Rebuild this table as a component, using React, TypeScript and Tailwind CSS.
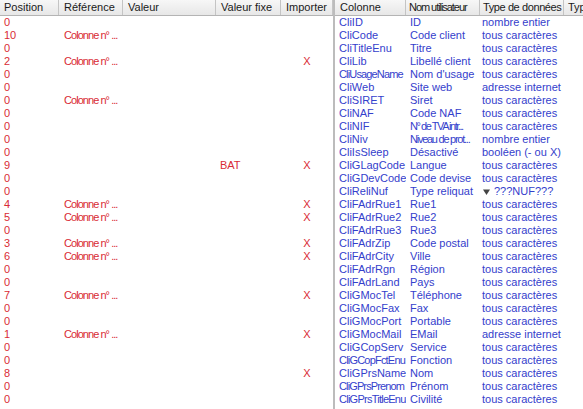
import React from "react";

const RED = "text-[#d92b35]";
const BLUE = "text-[#3440cc]";

const pos = [0, 10, 0, 2, 0, 0, 0, 0, 0, 0, 0, 9, 0, 0, 4, 5, 0, 3, 6, 0, 0, 7, 0, 0, 1, 0, 0, 8, 0, 0];
const refRows = new Set([1, 3, 6, 14, 15, 17, 18, 21, 24]);
const xRows = new Set([3, 11, 14, 15, 17, 18, 21, 24, 27]);

type R = { c: string; cc?: string; n: string; nc?: string; t: string; tri?: boolean };

const right: R[] = [
  { c: "CliID", n: "ID", t: "nombre entier" },
  { c: "CliCode", n: "Code client", t: "tous caractères" },
  { c: "CliTitleEnu", n: "Titre", t: "tous caractères" },
  { c: "CliLib", n: "Libellé client", t: "tous caractères" },
  { c: "CliUsageName", cc: "tracking-[-0.85px]", n: "Nom d'usage", t: "tous caractères" },
  { c: "CliWeb", n: "Site web", t: "adresse internet" },
  { c: "CliSIRET", n: "Siret", t: "tous caractères" },
  { c: "CliNAF", n: "Code NAF", t: "tous caractères" },
  { c: "CliNIF", n: "N° de TVA intr...", nc: "tracking-[-1.45px]", t: "tous caractères" },
  { c: "CliNiv", n: "Niveau de prot...", nc: "tracking-[-1.25px]", t: "nombre entier" },
  { c: "CliIsSleep", n: "Désactivé", t: "booléen (- ou X)" },
  { c: "CliGLagCode", n: "Langue", t: "tous caractères" },
  { c: "CliGDevCode", n: "Code devise", t: "tous caractères" },
  { c: "CliReliNuf", n: "Type reliquat", t: "???NUF???", tri: true },
  { c: "CliFAdrRue1", n: "Rue1", t: "tous caractères" },
  { c: "CliFAdrRue2", n: "Rue2", t: "tous caractères" },
  { c: "CliFAdrRue3", n: "Rue3", t: "tous caractères" },
  { c: "CliFAdrZip", n: "Code postal", t: "tous caractères" },
  { c: "CliFAdrCity", n: "Ville", t: "tous caractères" },
  { c: "CliFAdrRgn", n: "Région", t: "tous caractères" },
  { c: "CliFAdrLand", n: "Pays", t: "tous caractères" },
  { c: "CliGMocTel", n: "Téléphone", t: "tous caractères" },
  { c: "CliGMocFax", n: "Fax", t: "tous caractères" },
  { c: "CliGMocPort", n: "Portable", t: "tous caractères" },
  { c: "CliGMocMail", n: "EMail", t: "adresse internet" },
  { c: "CliGCopServ", n: "Service", t: "tous caractères" },
  { c: "CliGCopFctEnu", cc: "tracking-[-0.8px]", n: "Fonction", t: "tous caractères" },
  { c: "CliGPrsName", n: "Nom", t: "tous caractères" },
  { c: "CliGPrsPrenom", cc: "tracking-[-0.87px]", n: "Prénom", t: "tous caractères" },
  { c: "CliGPrsTitleEnu", cc: "tracking-[-0.75px]", n: "Civilité", t: "tous caractères" },
];

const hdr =
  "h-[15px] shrink-0 border-r border-[#c4c4c4] flex items-center whitespace-nowrap overflow-hidden text-[#1a1a1a]";

export default function App() {
  return (
    <div
      className="w-[583px] h-[409px] overflow-hidden bg-white flex text-[11px] leading-[13px]"
      style={{ fontFamily: '"Liberation Sans", Arial, sans-serif' }}
    >
      {/* Left panel */}
      <div className="w-[333px] shrink-0 flex flex-col">
        <div className="flex h-[16px] border-b border-[#b4b4b4] bg-[linear-gradient(#f7f7f7,#e7e7e7)]">
          <div className={`${hdr} w-[59px] pl-[4px]`}>Position</div>
          <div className={`${hdr} w-[64px] pl-[5px]`}>Référence</div>
          <div className={`${hdr} w-[93px] pl-[5px]`}>Valeur</div>
          <div className={`${hdr} w-[65px] pl-[5px]`}>Valeur fixe</div>
          <div className={`${hdr} w-[52px] justify-center`}>Importer</div>
        </div>
        {pos.map((p, i) => (
          <div key={i} className={`flex h-[13px] ${RED}`}>
            <div className="w-[59px] shrink-0 pl-[4px]">{p}</div>
            <div className="w-[64px] shrink-0 pl-[5px] whitespace-nowrap overflow-hidden tracking-[-0.95px]">
              {refRows.has(i) ? "Colonne n° ..." : ""}
            </div>
            <div className="w-[93px] shrink-0"></div>
            <div className="w-[65px] shrink-0 pl-[4px]">{i === 11 ? "BAT" : ""}</div>
            <div className="w-[52px] shrink-0 text-center">{xRows.has(i) ? "X" : ""}</div>
          </div>
        ))}
      </div>

      {/* Splitter */}
      <div className="w-[2px] shrink-0 bg-[#bcbcbc]" />

      {/* Right panel */}
      <div className="flex-1 flex flex-col overflow-hidden">
        <div className="flex h-[16px] border-b border-[#b4b4b4] bg-[linear-gradient(#f7f7f7,#e7e7e7)]">
          <div className={`${hdr} w-[71px] pl-[5px]`}>Colonne</div>
          <div className={`${hdr} w-[74px] pl-[3px] tracking-[-1.05px]`}>Nom utilisateur</div>
          <div className={`${hdr} w-[84px] pl-[3px] tracking-[-0.4px]`}>Type de données</div>
          <div className={`${hdr} w-[60px] pl-[4px]`}>Type</div>
        </div>
        {right.map((r, i) => (
          <div key={i} className={`flex h-[13px] whitespace-nowrap ${BLUE}`}>
            <div className={`w-[71px] shrink-0 pl-[4px] overflow-hidden ${r.cc ?? ""}`}>{r.c}</div>
            <div className={`w-[74px] shrink-0 pl-[4px] overflow-hidden ${r.nc ?? ""}`}>{r.n}</div>
            <div className="w-[84px] shrink-0 pl-[2px] overflow-hidden flex items-center">
              {r.tri ? (
                <>
                  <svg width="7" height="6" viewBox="0 0 7 6" className="mr-[4px] ml-[1px]">
                    <path d="M0 0.5 L7 0.5 L3.5 6 Z" fill="#444" />
                  </svg>
                  <span>{r.t}</span>
                </>
              ) : (
                r.t
              )}
            </div>
          </div>
        ))}
      </div>
    </div>
  );
}
